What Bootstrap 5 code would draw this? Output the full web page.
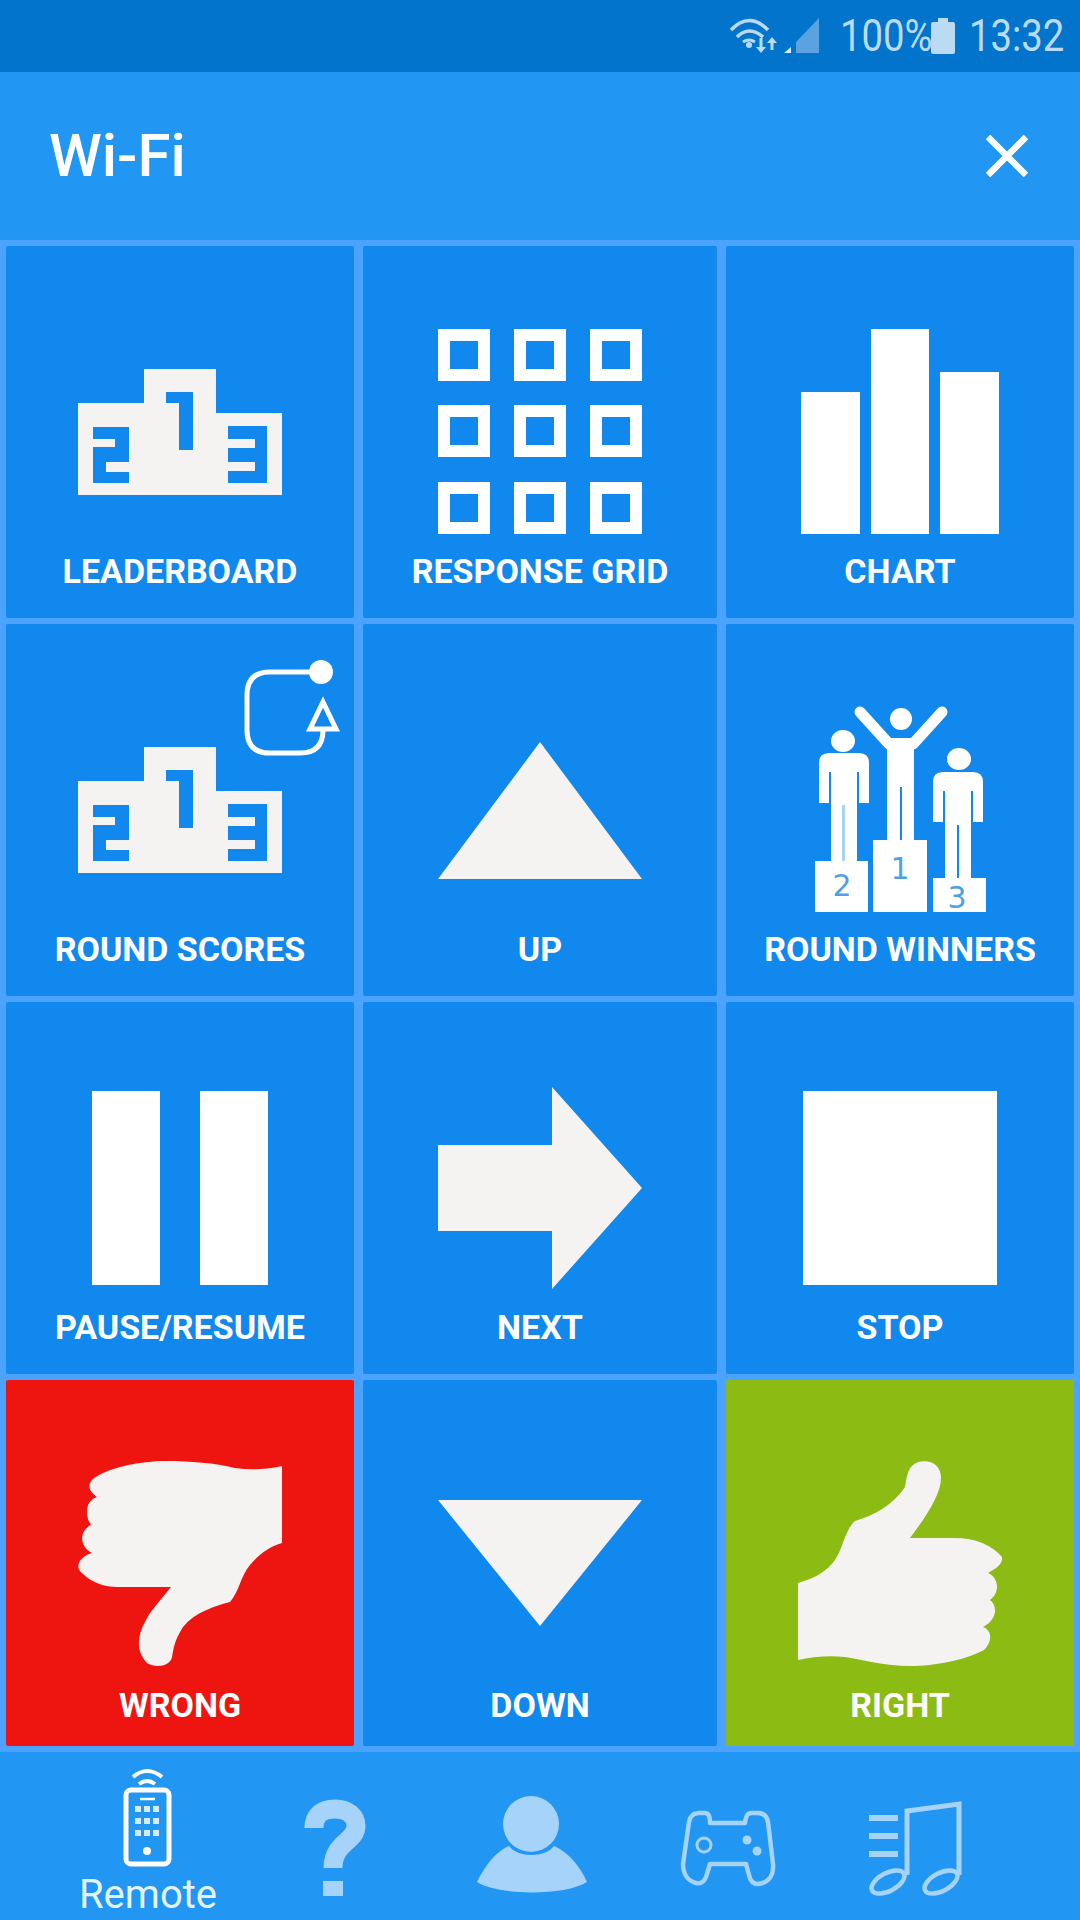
<!DOCTYPE html>
<html lang="en">
<head>
  <meta charset="UTF-8">
  <title>Wi-Fi</title>
  <link href="https://cdn.jsdelivr.net/npm/bootstrap@5.3.3/dist/css/bootstrap.min.css" rel="stylesheet">
  <style>
    body {
      width: 1080px;
      height: 1920px;
      overflow: hidden;
      background-color: #2196f3;
      font-family: Roboto, "Liberation Sans", sans-serif;
    }
    .status-strip {
      height: 72px;
      background-color: #0274cc;
      color: #bbdbf5;
    }
    .status-strip svg { display: block; }
    .status-text {
      font-size: 44px;
      line-height: 72px;
      transform: scaleX(.87);
      white-space: nowrap;
    }
    .status-pct { width: 91px; margin-left: 16px; transform-origin: left center; }
    .status-time { width: 96px; margin-left: 14px; margin-right: 15px; transform-origin: left center; }
    .app-head {
      height: 168px;
      padding: 0 52px 0 49px;
      background-color: #2196f3;
    }
    .app-title {
      font-size: 60px;
      font-weight: 500;
      line-height: 1;
      color: #fff;
    }
    .tile-grid {
      grid-template-columns: 348px 354px 348px;
      grid-template-rows: 372px 372px 372px 366px;
      gap: 6px 9px;
      padding: 6px;
      height: 1512px;
      background-color: #4ba3ff;
    }
    .tile {
      overflow: hidden;
      border-radius: 2px;
      background-color: #1088ee;
      color: #fff;
    }
    .tile svg { display: block; }
    .tile-red { background-color: #ee1410; }
    .tile-green { background-color: #8cbb14; }
    .tile-label {
      height: 50px;
      font-size: 34px;
      font-weight: 700;
      line-height: 50px;
      white-space: nowrap;
    }
    .ico-soft { fill: #f5f2f2; }
    .ico-white { fill: #fff; }
    .tab-bar {
      grid-template-columns: repeat(5, 196px);
      height: 168px;
      padding-left: 50px;
      overflow: hidden;
      background-color: #2196f3;
    }
    .tab-bar svg { display: block; }
    .tab-label {
      height: 50px;
      font-size: 40px;
      line-height: 50px;
      color: #e3f2fe;
    }
    .ico-dim { fill: #a5d3fa; }
    .line-dim { fill: none; stroke: #a5d3fa; }
  </style>
</head>
<body class="m-0">

<svg class="d-none" aria-hidden="true">
  <defs>
    <path id="podium" fill-rule="evenodd" d="M78 403H144V369H216V413H282V495H78Z M166 392H193V450H179V403H166Z M93 427H129V462H106V472H129V483H93V447H115V439H93Z M228 426H267V483H228V471H255V462H228V448H255V439H228Z"/>
    <path id="winner-body" d="M829 753H859Q869 753 869 763V803H859V772H857V861H831V772H829V803H819V763Q819 753 829 753Z"/>
  </defs>
</svg>

<!-- status bar -->
<div class="status-strip d-flex justify-content-end align-items-center">
  <svg width="96" height="72" viewBox="720 0 96 72">
    <g fill="none" stroke="#bbdbf5" stroke-width="3.5">
      <path d="M723 30Q741 11 760 30"/>
      <path d="M729 37Q741 25 755 37"/>
      <path d="M735 42Q741 38 747 42" stroke-width="3"/>
      <path d="M753 38V50M764 40V50" stroke-width="3"/>
    </g>
    <circle cx="741" cy="45" r="3" fill="#bbdbf5"/>
    <path d="M748 47H758L753 53ZM759 43H769L764 37Z" fill="#bbdbf5"/>
    <path d="M776 53H783V47Z" fill="#dcebf8"/>
    <path d="M788 42L811 18V53H788Z" fill="#5ba3e0"/>
  </svg>
  <span class="status-text status-pct">100%</span>
  <svg class="status-batt" width="24" height="36" viewBox="931 19 24 36">
    <path d="M938 19H948V23H953Q955 23 955 25V53Q955 55 953 55H933Q931 55 931 53V25Q931 23 933 23H938Z" fill="#bbdbf5"/>
  </svg>
  <span class="status-text status-time">13:32</span>
</div>

<!-- title bar -->
<header class="app-head d-flex justify-content-between align-items-center">
  <span class="app-title">Wi-Fi</span>
  <svg width="42" height="42" viewBox="987 135 42 42">
    <path d="M989 137L1027 175M1027 137L989 175" stroke="#fff" stroke-width="6.5" fill="none"/>
  </svg>
</header>

<!-- remote buttons -->
<main class="tile-grid d-grid">
  <div class="tile d-flex flex-column align-items-center">
    <svg width="348" height="300" viewBox="6 246 348 300"><use href="#podium" class="ico-soft"/></svg>
    <div class="tile-label">LEADERBOARD</div>
  </div>
  <div class="tile d-flex flex-column align-items-center">
    <svg width="354" height="300" viewBox="363 246 354 300">
      <path class="ico-white" fill-rule="evenodd" d="M438 329h52v52h-52Z M450 341v28h28v-28Z M514 329h52v52h-52Z M526 341v28h28v-28Z M590 329h52v52h-52Z M602 341v28h28v-28Z M438 405h52v52h-52Z M450 417v28h28v-28Z M514 405h52v52h-52Z M526 417v28h28v-28Z M590 405h52v52h-52Z M602 417v28h28v-28Z M438 482h52v52h-52Z M450 494v28h28v-28Z M514 482h52v52h-52Z M526 494v28h28v-28Z M590 482h52v52h-52Z M602 494v28h28v-28Z"/>
    </svg>
    <div class="tile-label">RESPONSE GRID</div>
  </div>
  <div class="tile d-flex flex-column align-items-center">
    <svg width="348" height="300" viewBox="726 246 348 300">
      <path class="ico-white" d="M801 392H860V534H801Z M871 329H929V534H871Z M940 372H999V534H940Z"/>
    </svg>
    <div class="tile-label">CHART</div>
  </div>

  <div class="tile d-flex flex-column align-items-center">
    <svg width="348" height="300" viewBox="6 624 348 300">
      <use href="#podium" class="ico-soft" y="378"/>
      <path d="M321 672H270Q247 672 247 695V730Q247 753 270 753H300Q323 753 323 730" fill="none" stroke="#fff" stroke-width="5"/>
      <circle cx="321" cy="672" r="12" fill="#fff"/>
      <path d="M323 702L336 729H310Z" fill="none" stroke="#fff" stroke-width="5"/>
    </svg>
    <div class="tile-label">ROUND SCORES</div>
  </div>
  <div class="tile d-flex flex-column align-items-center">
    <svg width="354" height="300" viewBox="363 624 354 300"><path class="ico-soft" d="M540 742L642 879H438Z"/></svg>
    <div class="tile-label">UP</div>
  </div>
  <div class="tile d-flex flex-column align-items-center">
    <svg width="348" height="300" viewBox="726 624 348 300">
      <circle class="ico-white" cx="901" cy="719" r="11"/>
      <path d="M860 712L889 744H913L942 712" fill="none" stroke="#fff" stroke-width="11" stroke-linecap="round" stroke-linejoin="round"/>
      <path class="ico-white" d="M887 738H914V840H887Z"/>
      <path d="M901 787V840" stroke="#1088ee" stroke-width="2"/>
      <ellipse class="ico-white" cx="843" cy="741" rx="12" ry="11"/>
      <use href="#winner-body" class="ico-white"/>
      <path d="M843.500 805V861" stroke="#a9d2f7" stroke-width="3"/>
      <ellipse class="ico-white" cx="959" cy="759" rx="12" ry="11"/>
      <use href="#winner-body" class="ico-white" x="114" y="19"/>
      <path d="M958 825V878" stroke="#1088ee" stroke-width="2"/>
      <path class="ico-white" d="M815 861H868V912H815Z M873 840H927V912H873Z M933 878H986V912H933Z"/>
      <g fill="#4f9fe8" font-family="'DejaVu Sans', sans-serif" font-size="30" text-anchor="middle">
        <text x="842" y="896">2</text>
        <text x="900" y="879">1</text>
        <text x="957" y="908">3</text>
      </g>
    </svg>
    <div class="tile-label">ROUND WINNERS</div>
  </div>

  <div class="tile d-flex flex-column align-items-center">
    <svg width="348" height="300" viewBox="6 1002 348 300">
      <path class="ico-white" d="M92 1091H160V1285H92Z M200 1091H268V1285H200Z"/>
    </svg>
    <div class="tile-label">PAUSE/RESUME</div>
  </div>
  <div class="tile d-flex flex-column align-items-center">
    <svg width="354" height="300" viewBox="363 1002 354 300">
      <path class="ico-soft" d="M438 1145H552V1087L642 1188L552 1289V1231H438Z"/>
    </svg>
    <div class="tile-label">NEXT</div>
  </div>
  <div class="tile d-flex flex-column align-items-center">
    <svg width="348" height="300" viewBox="726 1002 348 300"><path class="ico-white" d="M803 1091H997V1285H803Z"/></svg>
    <div class="tile-label">STOP</div>
  </div>

  <div class="tile tile-red d-flex flex-column align-items-center">
    <svg width="348" height="300" viewBox="6 1380 348 300">
      <path class="ico-soft" d="M282 1466C265 1470 250 1470 235 1468C215 1463 190 1461 167 1461C140 1461 105 1468 92 1480C88 1485 88 1490 97 1497C86 1500 84 1515 91 1525C80 1530 78 1546 92 1553C80 1556 74 1567 82 1573C92 1583 105 1587 117 1587H171C160 1601 150 1611 145 1622C138 1635 135 1650 147 1663C155 1668 170 1667 172 1657C174 1645 175 1640 183 1627C195 1612 215 1606 230 1602C240 1590 240 1577 250 1565C258 1555 270 1546 282 1543Z"/>
    </svg>
    <div class="tile-label">WRONG</div>
  </div>
  <div class="tile d-flex flex-column align-items-center">
    <svg width="354" height="300" viewBox="363 1380 354 300"><path class="ico-soft" d="M438 1500H642L540 1626Z"/></svg>
    <div class="tile-label">DOWN</div>
  </div>
  <div class="tile tile-green d-flex flex-column align-items-center">
    <svg width="348" height="300" viewBox="726 1380 348 300">
      <path class="ico-soft" d="M798 1583C815 1578 826 1572 835 1560C843 1548 845 1530 855 1521C875 1515 893 1505 905 1487C907 1475 908 1466 918 1462C930 1459 941 1464 941 1478C941 1495 925 1518 910 1538H955C975 1538 992 1545 1002 1557C1003 1565 995 1569 988 1573C998 1577 1001 1592 990 1600C998 1606 997 1620 983 1627C993 1631 992 1642 984 1650C965 1660 935 1666 910 1666C885 1666 865 1660 845 1657C828 1655 812 1657 798 1660Z"/>
    </svg>
    <div class="tile-label">RIGHT</div>
  </div>
</main>

<!-- bottom tabs -->
<footer class="tab-bar d-grid">
  <div class="d-flex flex-column align-items-center">
    <svg width="196" height="118" viewBox="50 1752 196 118">
      <g fill="none" stroke="#fff" stroke-width="4">
        <path d="M133 1777Q147 1765 162 1777"/>
        <path d="M139 1784Q147 1778 155 1784"/>
        <rect x="126" y="1790" width="43" height="74" rx="5" stroke-width="5"/>
        <path d="M140 1799H155" stroke-width="2.500"/>
      </g>
      <path fill="#d6eafc" d="M135 1806h6v6h-6Z M144 1806h6v6h-6Z M153 1806h6v6h-6Z M135 1818h6v6h-6Z M144 1818h6v6h-6Z M153 1818h6v6h-6Z M135 1830h6v6h-6Z M144 1830h6v6h-6Z M153 1830h6v6h-6Z"/>
      <circle cx="147" cy="1851" r="4" fill="#fff"/>
    </svg>
    <div class="tab-label">Remote</div>
  </div>
  <div>
    <svg width="196" height="168" viewBox="246 1752 196 168">
      <path class="line-dim" stroke-width="19" d="M314 1828C314 1815 322 1809 335 1809C348 1809 356 1816 356 1826C356 1842 333 1842 333 1868"/>
      <path class="ico-dim" d="M323 1881H343V1896H323Z"/>
    </svg>
  </div>
  <div>
    <svg width="196" height="168" viewBox="442 1752 196 168">
      <circle class="ico-dim" cx="531" cy="1824" r="28"/>
      <path class="ico-dim" d="M477 1882C485 1866 495 1852 509 1846C518 1858 545 1858 554 1846C568 1852 580 1866 587 1882C565 1896 499 1896 477 1882Z"/>
    </svg>
  </div>
  <div>
    <svg width="196" height="168" viewBox="638 1752 196 168">
      <path class="line-dim" stroke-width="4.500" stroke-linejoin="round" d="M710 1823H745C746 1816 747 1813 752 1813H758C764 1813 767 1817 768 1822L773 1864C774 1876 768 1883 758 1884C752 1884 750 1880 749 1875L746 1864H710L706 1877C704 1882 700 1884 696 1883C688 1881 683 1874 683 1864L689 1822C690 1816 693 1813 699 1813H705C708 1813 710 1816 710 1823Z"/>
      <circle class="line-dim" stroke-width="3" cx="704" cy="1845" r="7"/>
      <circle class="ico-dim" cx="747" cy="1840" r="4.500"/>
      <circle class="ico-dim" cx="757" cy="1851" r="4.500"/>
    </svg>
  </div>
  <div>
    <svg width="196" height="168" viewBox="834 1752 196 168">
      <path class="ico-dim" d="M869 1815H898V1821H869Z M869 1833H898V1839H869Z M869 1851H898V1857H869Z"/>
      <path class="line-dim" stroke-width="5" d="M907 1875V1811L959 1804V1875"/>
      <ellipse class="line-dim" stroke-width="4.500" cx="888" cy="1882" rx="18" ry="9" transform="rotate(-28 888 1882)"/>
      <ellipse class="line-dim" stroke-width="4.500" cx="941" cy="1882" rx="18" ry="9" transform="rotate(-28 941 1882)"/>
    </svg>
  </div>
</footer>

<script src="https://cdn.jsdelivr.net/npm/bootstrap@5.3.3/dist/js/bootstrap.bundle.min.js"></script>
</body>
</html>
